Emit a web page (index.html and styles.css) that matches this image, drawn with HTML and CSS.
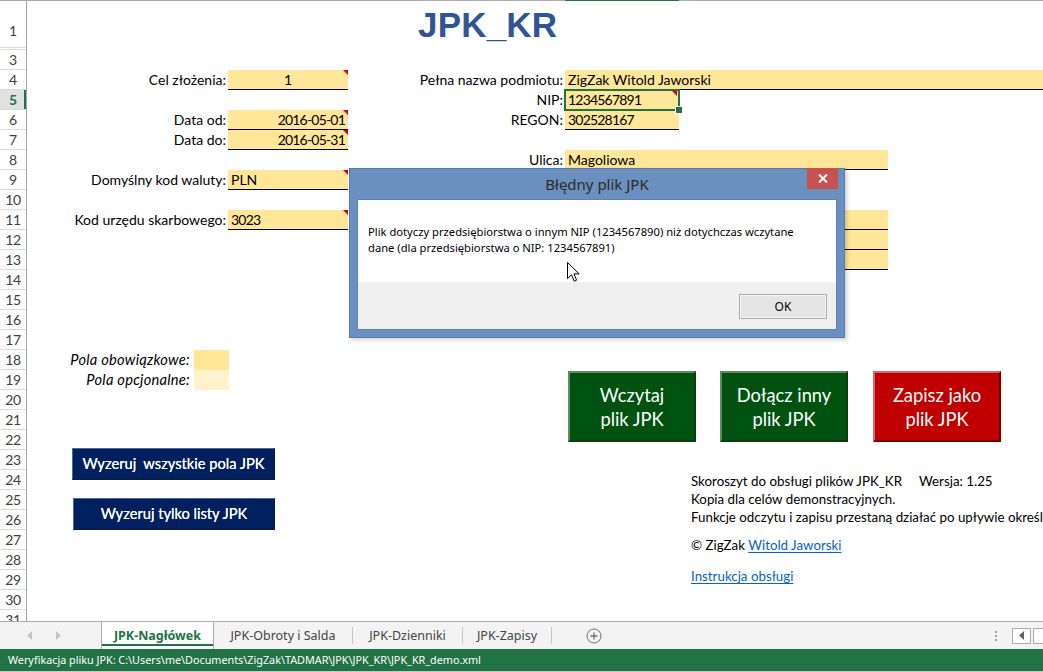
FILE: index.html
```html
<!DOCTYPE html>
<html lang="pl">
<head>
<meta charset="utf-8">
<title>JPK_KR</title>
<link rel="stylesheet" href="styles.css">
</head>
<body>
<div class="app">
  <div class="colbar"><span class="colbar-sel"></span></div>
  <div class="sheet">
    <div class="rowhdr">
      <div class="rh r1">1</div>
      <div class="rh r2"></div>
      <div class="rh">3</div>
      <div class="rh">4</div>
      <div class="rh sel">5</div>
      <div class="rh">6</div>
      <div class="rh">7</div>
      <div class="rh">8</div>
      <div class="rh">9</div>
      <div class="rh">10</div>
      <div class="rh">11</div>
      <div class="rh">12</div>
      <div class="rh">13</div>
      <div class="rh">14</div>
      <div class="rh">15</div>
      <div class="rh">16</div>
      <div class="rh">17</div>
      <div class="rh">18</div>
      <div class="rh">19</div>
      <div class="rh">20</div>
      <div class="rh">21</div>
      <div class="rh">22</div>
      <div class="rh">23</div>
      <div class="rh">24</div>
      <div class="rh">25</div>
      <div class="rh">26</div>
      <div class="rh">27</div>
      <div class="rh">28</div>
      <div class="rh">29</div>
      <div class="rh">30</div>
      <div class="rh">31</div>
    </div>
    <div class="grid">
      <div class="title">JPK_KR</div>

      <div class="lbl row4 colA">Cel złożenia:</div>
      <div class="cell row4 colB center note">1</div>
      <div class="lbl row4 colC">Pełna nazwa podmiotu:</div>
      <div class="cell row4 colDF">ZigZak Witold Jaworski</div>

      <div class="lbl row5 colC">NIP:</div>
      <div class="cell row5 colD note active num">1234567891</div>

      <div class="lbl row6 colA">Data od:</div>
      <div class="cell row6 colB right note num">2016-05-01</div>
      <div class="lbl row6 colC">REGON:</div>
      <div class="cell row6 colD num">302528167</div>

      <div class="lbl row7 colA">Data do:</div>
      <div class="cell row7 colB right note num">2016-05-31</div>

      <div class="lbl row8 colC">Ulica:</div>
      <div class="cell row8 colDE">Magoliowa</div>

      <div class="lbl row9 colA">Domyślny kod waluty:</div>
      <div class="cell row9 colB note">PLN</div>
      <div class="cell row9 colD"></div>
      <div class="cell row10 colD"></div>

      <div class="lbl row11 colA">Kod urzędu skarbowego:</div>
      <div class="cell row11 colB note num">3023</div>
      <div class="cell row11 colDE"></div>
      <div class="cell row12 colDE"></div>
      <div class="cell row13 colDE"></div>

      <div class="legend row18">
        <span class="legend-lbl">Pola obowiązkowe:</span><span class="swatch req"></span>
      </div>
      <div class="legend row19">
        <span class="legend-lbl">Pola opcjonalne:</span><span class="swatch opt"></span>
      </div>

      <div class="bigbtns">
        <div class="bigbtn green">Wczytaj<br>plik JPK</div>
        <div class="bigbtn green">Dołącz inny<br>plik JPK</div>
        <div class="bigbtn red">Zapisz jako<br>plik JPK</div>
      </div>

      <div class="resetbtns">
        <div class="navbtn first">Wyzeruj&nbsp; wszystkie pola JPK</div>
        <div class="navbtn second">Wyzeruj tylko listy JPK</div>
      </div>

      <div class="info">
        <div class="info-line">Skoroszyt do obsługi plików JPK_KR<span class="ver">Wersja: 1.25</span></div>
        <div class="info-line">Kopia dla celów demonstracyjnych.</div>
        <div class="info-line">Funkcje odczytu i zapisu przestaną działać po upływie określonego czasu.</div>
        <div class="info-line copy">© ZigZak <span class="link">Witold Jaworski</span></div>
        <div class="info-line manual"><span class="link">Instrukcja obsługi</span></div>
      </div>
    </div>
  </div>

  <div class="tabbar">
    <div class="tabnav">
      <svg class="navarrow" width="6" height="9" viewBox="0 0 6 9"><polygon points="5,0 5,9 0,4.5" fill="#c4c4c4"/></svg>
      <svg class="navarrow" width="6" height="9" viewBox="0 0 6 9"><polygon points="1,0 1,9 6,4.5" fill="#c4c4c4"/></svg>
    </div>
    <div class="tab active">JPK-Nagłówek</div>
    <div class="tab t2">JPK-Obroty i Salda</div>
    <i class="sep"></i>
    <div class="tab t3">JPK-Dzienniki</div>
    <i class="sep"></i>
    <div class="tab t4">JPK-Zapisy</div>
    <i class="sep"></i>
    <svg class="addsheet" width="16" height="16" viewBox="0 0 16 16"><circle cx="8" cy="8" r="7" fill="none" stroke="#6f6f6f" stroke-width="1"/><path d="M8 4.5v7M4.5 8h7" stroke="#6f6f6f" stroke-width="1.3"/></svg>
    <div class="spacer"></div>
    <div class="dots"><i></i><i></i><i></i></div>
    <div class="scrollbox"><svg width="6" height="9" viewBox="0 0 6 9"><polygon points="5,0 5,9 0,4.5" fill="#606060"/></svg></div>
    <div class="scrollbox2"></div>
  </div>
  <div class="status">Weryfikacja pliku JPK: C:\Users\me\Documents\ZigZak\TADMAR\JPK\JPK_KR\JPK_KR_demo.xml</div>

  <div class="dialog">
    <div class="dlg-title">Błędny plik JPK
      <div class="dlg-close"><svg width="10" height="9" viewBox="0 0 10 9"><path d="M1 0.5L9 8.5M9 0.5L1 8.5" stroke="#fff" stroke-width="2"/></svg></div>
    </div>
    <div class="dlg-body">
      <div class="dlg-msg">Plik dotyczy przedsiębiorstwa o innym NIP (1234567890) niż dotychczas wczytane<br>dane (dla przedsiębiorstwa o NIP: 1234567891)</div>
      <div class="dlg-foot"><div class="okbtn">OK</div></div>
    </div>
  </div>

  <svg class="cursor" width="13" height="21" viewBox="0 0 13 21"><path d="M0.5 0.5V16.5L4.5 12.8L7.2 19.2L9.6 18.2L7 11.9H12.2Z" fill="#fff" stroke="#000" stroke-width="1" stroke-linejoin="miter"/></svg>
</div>
</body>
</html>
```

FILE: styles.css
```css
* { box-sizing: border-box; }
html, body { margin: 0; padding: 0; background: #fff; }
body { width: 1043px; height: 672px; overflow: hidden; }

.app {
  position: relative;
  width: 1043px;
  height: 672px;
  overflow: hidden;
  display: flex;
  flex-direction: column;
  font-family: "Lato", "Liberation Sans", sans-serif;
  color: #000;
}

/* top border strip (column header edge) */
.colbar {
  height: 1px;
  background: #ababab;
  display: flex;
  padding-left: 565px;
  flex: none;
}
.colbar-sel { width: 114px; height: 1px; background: #217346; }

.sheet {
  height: 620px;
  flex: none;
  display: flex;
  overflow: hidden;
}

/* row headers */
.rowhdr {
  width: 27px;
  flex: none;
  border-right: 1px solid #a6a6a6;
  display: flex;
  flex-direction: column;
}
.rh {
  height: 20px;
  flex: none;
  border-bottom: 1px solid #dadada;
  font-size: 14px;
  line-height: 20px;
  text-align: center;
  color: #404040;
  letter-spacing: -0.3px;
}
.rh.r1 { height: 47px; line-height: 60px; }
.rh.r2 { height: 2px; }
.rh.sel {
  background: #e1e1e1;
  color: #217346;
  font-weight: 700;
  box-shadow: inset -2px 0 0 #217346;
}

/* sheet grid */
.grid {
  flex: 1;
  display: grid;
  grid-template-columns: 201px 120px 217px 114px 209px 1fr;
  grid-template-rows: 47px 2px repeat(29, 20px);
  font-size: 14px;
  line-height: 20px;
  white-space: nowrap;
}

.title {
  grid-row: 1;
  grid-column: 1 / -1;
  padding-left: 391px;
  font-family: "Liberation Sans", Arial, sans-serif;
  font-weight: 700;
  font-size: 35px;
  line-height: 47px;
  color: #2f5597;
  letter-spacing: 0.2px;
}

.row4 { grid-row: 4; }
.row5 { grid-row: 5; }
.row6 { grid-row: 6; }
.row7 { grid-row: 7; }
.row8 { grid-row: 8; }
.row9 { grid-row: 9; }
.row10 { grid-row: 10; }
.row11 { grid-row: 11; }
.row12 { grid-row: 12; }
.row13 { grid-row: 13; }
.row18 { grid-row: 18; }
.row19 { grid-row: 19; }

.colA { grid-column: 1; }
.colB { grid-column: 2; }
.colC { grid-column: 3; }
.colD { grid-column: 4; }
.colDE { grid-column: 4 / 6; }
.colDF { grid-column: 4 / -1; }

.lbl {
  text-align: right;
  padding-right: 2px;
}

.cell {
  position: relative;
  background: #ffe699;
  border-bottom: 1px solid #000;
  padding: 0 3px;
  overflow: visible;
}
.cell.num { letter-spacing: -0.8px; }
.cell.center { text-align: center; }
.cell.right { text-align: right; padding-right: 3px; }

.cell.note::after {
  content: "";
  position: absolute;
  top: 0;
  right: 0;
  width: 0;
  height: 0;
  border-top: 5px solid #e00000;
  border-left: 5px solid transparent;
}
.cell.active {
  border-bottom: none;
  outline: 2px solid #217346;
  outline-offset: -1px;
  z-index: 1;
}
.cell.active::after { top: 1px; right: 2px; }
.cell.active::before {
  content: "";
  position: absolute;
  right: -4px;
  bottom: -4px;
  width: 6px;
  height: 6px;
  background: #217346;
  border: 1px solid #fff;
}

/* legend */
.legend {
  grid-column: 1 / 3;
  display: flex;
  justify-content: flex-end;
  align-items: stretch;
  padding-right: 119px;
  font-style: italic;
  font-size: 14.67px;
  letter-spacing: 0.25px;
}
.legend-lbl { margin-right: 4px; }
.swatch { width: 35px; }
.swatch.req { background: #ffe699; }
.swatch.opt { background: #fff2cc; }

/* big action buttons */
.bigbtns {
  grid-row: 19 / span 4;
  grid-column: 3 / -1;
  display: flex;
  align-items: flex-start;
  gap: 24px;
  padding-left: 220px;
  padding-top: 1px;
}
.bigbtn {
  width: 128px;
  height: 71px;
  display: flex;
  align-items: center;
  justify-content: center;
  text-align: center;
  color: #fff;
  font-size: 18.3px;
  line-height: 24px;
  border: 2px solid;
}
.bigbtn.green {
  background: #005210;
  border-color: #5b8d5f #0e3a12 #0e3a12 #5b8d5f;
}
.bigbtn.red {
  background: #c00000;
  border-color: #d66a6a #7a0000 #7a0000 #d66a6a;
  margin-left: 1px;
}

/* reset buttons */
.resetbtns {
  grid-row: 22 / span 5;
  grid-column: 1 / 3;
  display: flex;
  flex-direction: column;
  align-items: flex-start;
  padding-left: 45px;
  padding-top: 18px;
  gap: 18px;
}
.navbtn {
  height: 34px;
  width: 203px;
  background: #002060;
  color: #fff;
  border: 1px solid;
  border-color: #52698f #0c1c3c #0c1c3c #52698f;
  display: flex;
  align-items: center;
  justify-content: center;
  font-size: 14.67px;
  white-space: pre;
  text-shadow: 0 0 0.4px #fff;
}
.navbtn.second { width: 202px; height: 33px; margin-left: 1px; }

/* info text box */
.info {
  grid-row: 24 / span 7;
  grid-column: 5 / -1;
  padding-left: 12px;
  padding-top: 2px;
  font-size: 13.33px;
  line-height: 18px;
  overflow: visible;
}
.ver { margin-left: 17px; }
.info-line.copy { margin-top: 10px; }
.info-line.manual { margin-top: 13px; }
.link {
  color: #0563c1;
  text-decoration: underline;
  text-underline-offset: 2px;
}

/* sheet tabs */
.tabbar {
  height: 28px;
  flex: none;
  border-top: 1px solid #ababab;
  background: #f3f3f3;
  display: flex;
  align-items: stretch;
  font-family: "Noto Sans", "Open Sans", sans-serif;
  font-size: 12.5px;
  color: #444;
}
.tabnav {
  width: 101px;
  flex: none;
  display: flex;
  align-items: center;
  padding-left: 27px;
  gap: 22px;
}
.tab {
  display: flex;
  align-items: center;
  justify-content: center;
  flex: none;
  white-space: nowrap;
}
.tab.active {
  width: 113px;
  background: #fff;
  color: #217346;
  font-weight: 700;
  border-left: 1px solid #ababab;
  border-right: 1px solid #ababab;
  box-shadow: inset 0 -3px 0 #fff, inset 0 -5px 0 #217346;
  padding-bottom: 1px;
}
.tab.t2 { width: 138px; }
.tab.t3 { width: 109px; }
.tab.t4 { width: 88px; }
.sep {
  width: 1px;
  flex: none;
  background: #c6c6c6;
  margin: 5px 0 5px;
}
.addsheet { flex: none; align-self: center; margin-left: 34px; }
.spacer { flex: 1; }
.dots {
  display: flex;
  flex-direction: column;
  justify-content: center;
  gap: 2px;
  margin-right: 15px;
}
.dots i { width: 2px; height: 2px; background: #a0a0a0; display: block; }
.scrollbox {
  width: 19px;
  height: 16px;
  align-self: center;
  border: 1px solid #ababab;
  background: #fff;
  display: flex;
  align-items: center;
  justify-content: center;
  margin-right: 2px;
}
.scrollbox2 {
  width: 10px;
  height: 16px;
  align-self: center;
  border: 1px solid #ababab;
  border-right: none;
  background: #fff;
}

.status {
  height: 23px;
  flex: none;
  background: #217346;
  border-bottom: 1px solid #c8c8c8;
  color: #fff;
  font-family: "Noto Sans", "Open Sans", sans-serif;
  font-size: 10.8px;
  line-height: 22px;
  padding-left: 8px;
  white-space: nowrap;
}

/* message box */
.dialog {
  position: absolute;
  left: 349px;
  top: 168px;
  width: 496px;
  height: 170px;
  background: #6b8fbf;
  border: 1px solid #557aae;
  box-shadow: 2px 2px 4px rgba(0, 0, 0, 0.18);
  display: flex;
  flex-direction: column;
  font-family: "Noto Sans", "Open Sans", sans-serif;
  z-index: 5;
}
.dlg-title {
  position: relative;
  height: 30px;
  flex: none;
  text-align: center;
  font-size: 15px;
  line-height: 31px;
  color: #2b2b2b;
}
.dlg-close {
  position: absolute;
  top: -1px;
  right: 6px;
  width: 31px;
  height: 21px;
  background: #c75050;
  display: flex;
  align-items: center;
  justify-content: center;
}
.dlg-body {
  flex: 1;
  margin: 0 7px 7px;
  border: 1px solid #5f82b5;
  display: flex;
  flex-direction: column;
  background: #fff;
}
.dlg-msg {
  height: 82px;
  flex: none;
  padding: 24px 0 0 10px;
  font-size: 11.2px;
  line-height: 16px;
  color: #000;
  white-space: nowrap;
}
.dlg-foot {
  flex: 1;
  background: #f0f0f0;
  display: flex;
  justify-content: flex-end;
  align-items: flex-start;
  padding: 12px 9px 0 0;
}
.okbtn {
  width: 88px;
  height: 25px;
  background: #e5e5e5;
  border: 1px solid #acacac;
  box-shadow: inset 0 0 0 1px #f4f4f4;
  font-size: 12px;
  line-height: 23px;
  text-align: center;
  color: #000;
}

.cursor {
  position: absolute;
  left: 567px;
  top: 262px;
  z-index: 10;
}
```
